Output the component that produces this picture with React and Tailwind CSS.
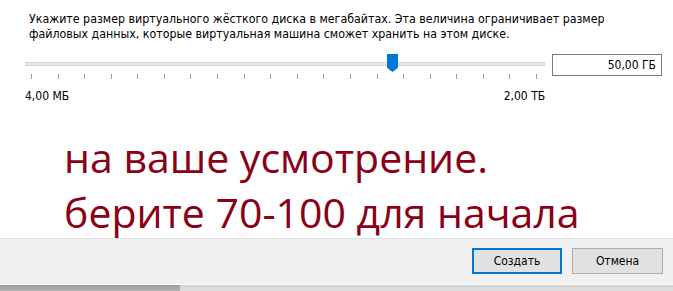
export default function App() {
  const ticks = Array.from({ length: 20 });

  return (
    <div
      className="w-[673px] h-[291px] bg-white flex flex-col overflow-hidden text-[12px] text-black"
      style={{ fontFamily: '"DejaVu Sans Condensed", "DejaVu Sans", sans-serif' }}
    >
      <div className="flex-1 overflow-hidden">
        {/* description */}
        <div className="pl-[29px] pt-[12px] leading-[15px] text-[12.3px]">
          <p>Укажите размер виртуального жёсткого диска в мегабайтах. Эта величина ограничивает размер</p>
          <p>файловых данных, которые виртуальная машина сможет хранить на этом диске.</p>
        </div>

        {/* slider + size field */}
        <div className="flex pl-[25px] pr-[11px] mt-[12px]">
          <div className="relative w-[521px] h-[50px]">
            <div className="mt-[8px] h-[4px] bg-[#e7e7e7] border border-[#d6d6d6]"></div>
            <div className="flex justify-between pl-[6px] pr-[8px] mt-[8px]">
              {ticks.map((_, i) => (
                <div key={i} className="w-px h-[5px] bg-[#a3a394]"></div>
              ))}
            </div>
            <div className="flex justify-between mt-[10px] leading-[14px]">
              <span>4,00 МБ</span>
              <span>2,00 ТБ</span>
            </div>
            {/* thumb */}
            <svg className="absolute left-[362px] top-0" width="11" height="18" viewBox="0 0 11 18">
              <path d="M0 0H11V12.5C11 14 9 15.5 5.5 18C2 15.5 0 14 0 12.5Z" fill="#0078d7" />
            </svg>
          </div>
          <div className="ml-[7px] w-[110px] h-[22px] border border-[#7a7a7a] flex items-center justify-end pr-[5px]">
            50,00 ГБ
          </div>
        </div>

        {/* red note */}
        <div
          className="pl-[64px] mt-[26px] text-[41px] leading-[55px] text-[#8a0014]"
          style={{ fontFamily: '"Open Sans", sans-serif' }}
        >
          <p>на ваше усмотрение.</p>
          <p>берите 70-100 для начала</p>
        </div>
      </div>

      {/* button bar */}
      <div className="h-[46px] shrink-0 bg-[#f0f0f0] border-t border-[#dfdfdf] flex justify-end items-start pt-[9px] pr-[10px] gap-[10px]">
        <button className="w-[90px] h-[26px] bg-[#e1e1e1] border-2 border-[#0078d7] text-[12px]">
          Создать
        </button>
        <button className="w-[91px] h-[26px] bg-[#e1e1e1] border border-[#adadad] text-[12px]">
          Отмена
        </button>
      </div>
      <div className="h-px bg-white shrink-0"></div>
      <div className="h-[6px] shrink-0 flex">
        <div className="w-[180px] bg-gradient-to-b from-[#9c9c9c] to-[#b4b4b4]"></div>
        <div className="flex-1 bg-gradient-to-b from-[#d2d2d2] to-[#e2e2e2]"></div>
      </div>
    </div>
  );
}
